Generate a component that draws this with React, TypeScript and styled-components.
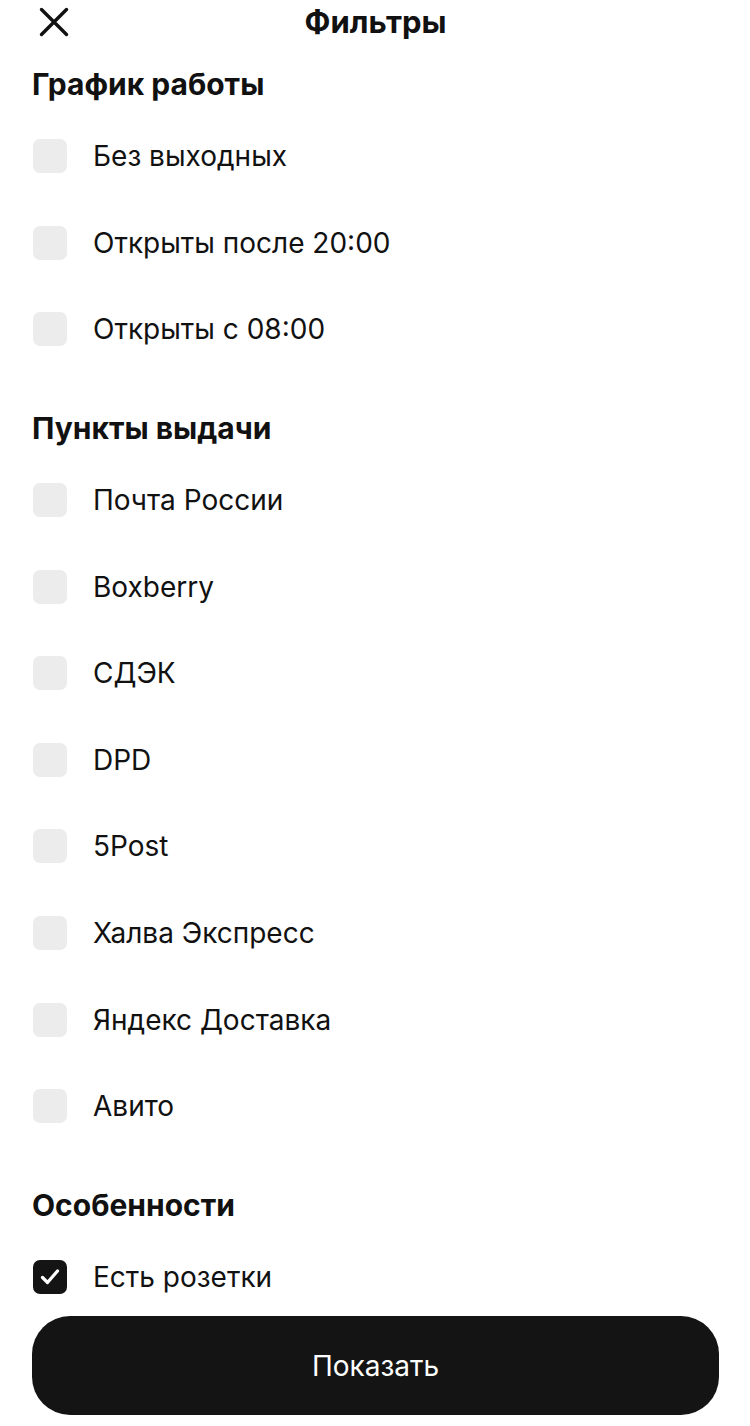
import styled, { createGlobalStyle } from "styled-components";

const GlobalStyle = createGlobalStyle`
  html, body {
    margin: 0;
    padding: 0;
    background: #ffffff;
  }
  body {
    font-family: Inter, Roboto, "Liberation Sans", sans-serif;
    color: #111111;
  }
`;

type Option = { label: string; checked?: boolean };

const sections: { title: string; options: Option[] }[] = [
  {
    title: "График работы",
    options: [
      { label: "Без выходных" },
      { label: "Открыты после 20:00" },
      { label: "Открыты с 08:00" },
    ],
  },
  {
    title: "Пункты выдачи",
    options: [
      { label: "Почта России" },
      { label: "Boxberry" },
      { label: "СДЭК" },
      { label: "DPD" },
      { label: "5Post" },
      { label: "Халва Экспресс" },
      { label: "Яндекс Доставка" },
      { label: "Авито" },
    ],
  },
  {
    title: "Особенности",
    options: [{ label: "Есть розетки", checked: true }],
  },
];

function CloseIcon() {
  return (
    <svg width="30" height="30" viewBox="0 0 30 30" fill="none">
      <path
        d="M2.5 2.5L27.5 27.5M27.5 2.5L2.5 27.5"
        stroke="#111"
        strokeWidth="3.4"
        strokeLinecap="round"
      />
    </svg>
  );
}

function CheckIcon() {
  return (
    <svg width="24" height="24" viewBox="0 0 24 24" fill="none">
      <path
        d="M4.5 12.5L9.5 17.5L19.5 6"
        stroke="#fff"
        strokeWidth="3.2"
        strokeLinecap="round"
        strokeLinejoin="round"
      />
    </svg>
  );
}

export default function App() {
  return (
    <>
      <GlobalStyle />
      <Page>
        <Header>
          <CloseButton>
            <CloseIcon />
          </CloseButton>
          <Title>Фильтры</Title>
        </Header>
        {sections.map((section) => (
          <Section key={section.title}>
            <SectionTitle>{section.title}</SectionTitle>
            {section.options.map((option) => (
              <Row key={option.label}>
                <Box $checked={!!option.checked}>
                  {option.checked && <CheckIcon />}
                </Box>
                <Label>{option.label}</Label>
              </Row>
            ))}
          </Section>
        ))}
        <Footer>
          <ShowButton>Показать</ShowButton>
        </Footer>
      </Page>
    </>
  );
}

const Page = styled.div`
  width: 750px;
  min-height: 1426px;
  box-sizing: border-box;
  padding: 0 31px 0 32px;
  display: flex;
  flex-direction: column;
`;

const Header = styled.header`
  height: 44px;
  display: flex;
  align-items: center;
  justify-content: center;
  position: relative;
  margin-bottom: 20px;
`;

const CloseButton = styled.button`
  position: absolute;
  left: 7px;
  top: 7px;
  width: 30px;
  height: 30px;
  padding: 0;
  border: none;
  background: none;
  display: flex;
`;

const Title = styled.h1`
  margin: 0;
  font-size: 31px;
  font-weight: 700;
  line-height: 44px;
`;

const Section = styled.section`
  display: flex;
  flex-direction: column;
  margin-bottom: 35px;

  &:last-of-type {
    margin-bottom: 0;
  }
`;

const SectionTitle = styled.h2`
  margin: 0 0 9px;
  font-size: 30px;
  font-weight: 700;
  line-height: 40px;
`;

const Row = styled.label`
  height: 86.6px;
  display: flex;
  align-items: center;
  gap: 26px;
  padding-left: 1px;
`;

const Box = styled.span<{ $checked: boolean }>`
  width: 34px;
  height: 34px;
  border-radius: 7px;
  flex-shrink: 0;
  display: flex;
  align-items: center;
  justify-content: center;
  background: ${(p) => (p.$checked ? "#141414" : "#ececec")};
`;

const Label = styled.span`
  font-size: 28px;
  line-height: 34px;
`;

const Footer = styled.div`
  margin-top: -4px;
  padding-bottom: 10px;
`;

const ShowButton = styled.button`
  width: 100%;
  height: 99px;
  border: none;
  border-radius: 38px;
  background: #141414;
  color: #ffffff;
  font-family: Inter, Roboto, "Liberation Sans", sans-serif;
  font-size: 28px;
  font-weight: 400;
  cursor: pointer;
`;
